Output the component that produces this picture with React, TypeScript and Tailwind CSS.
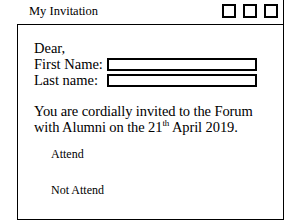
import React from "react";

export default function App() {
  return (
    <div className="w-[284px] h-[220px] border-r border-black bg-white text-black font-['Liberation_Serif',serif] flex flex-col">
      {/* title bar */}
      <div className="h-[24px] flex items-start justify-between pl-[29px] pr-[5px] pt-[3px]">
        <span className="text-[12.5px] leading-[16px]">My Invitation</span>
        <div className="flex gap-[7px] pt-[1px]">
          <div className="w-[14px] h-[14px] border-2 border-black" />
          <div className="w-[14px] h-[14px] border-2 border-black" />
          <div className="w-[14px] h-[14px] border-2 border-black" />
        </div>
      </div>

      {/* card */}
      <div className="ml-[17px] flex-1 border-l border-t border-b border-black pl-[16px] pt-[15px]">
        <div className="text-[14.5px] leading-[16px]">
          <div>Dear,</div>
          <div className="flex items-center">
            <span className="w-[73px]">First Name:</span>
            <div className="w-[150px] h-[13px] border-2 border-black" />
          </div>
          <div className="flex items-center">
            <span className="w-[73px]">Last name:</span>
            <div className="w-[150px] h-[13px] border-2 border-black" />
          </div>
        </div>
        <p className="text-[14.5px] leading-[15.5px] mt-[16px] tracking-[-0.1px]">
          You are cordially invited to the Forum
          <br />
          with Alumni on the 21<sup className="text-[9px] -top-[6px]">th</sup> April 2019.
        </p>
        <div className="pl-[17px] mt-[12px] text-[12px] leading-[14px]">
          <div>Attend</div>
          <div className="mt-[22px]">Not Attend</div>
        </div>
      </div>
    </div>
  );
}
